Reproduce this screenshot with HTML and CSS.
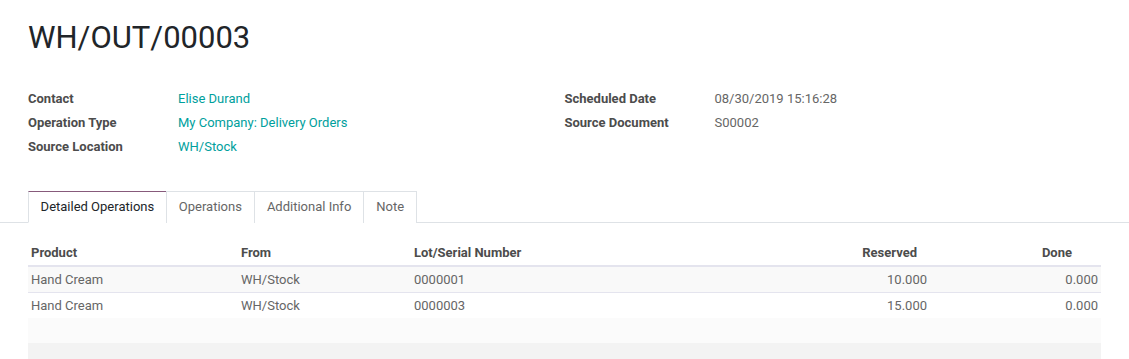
FILE: index.html
```html
<!DOCTYPE html>
<html>
<head>
    <title>WH/OUT/00003</title>
    <link rel="stylesheet" href="styles.css">
</head>
<body>
    <div class="sheet">
        <h1 class="title">WH/OUT/00003</h1>

        <div class="groups">
            <div class="group">
                <div class="field">
                    <span class="label">Contact</span>
                    <a class="value link">Elise Durand</a>
                </div>
                <div class="field">
                    <span class="label">Operation Type</span>
                    <a class="value link">My Company: Delivery Orders</a>
                </div>
                <div class="field">
                    <span class="label">Source Location</span>
                    <a class="value link">WH/Stock</a>
                </div>
            </div>
            <div class="group">
                <div class="field">
                    <span class="label">Scheduled Date</span>
                    <span class="value">08/30/2019 15:16:28</span>
                </div>
                <div class="field">
                    <span class="label">Source Document</span>
                    <span class="value">S00002</span>
                </div>
            </div>
        </div>
    </div>

    <ul class="tabs">
        <li class="tab active">Detailed Operations</li>
        <li class="tab">Operations</li>
        <li class="tab">Additional Info</li>
        <li class="tab">Note</li>
    </ul>

    <div class="sheet">
        <table class="lines">
            <colgroup>
                <col style="width: 210px">
                <col style="width: 173px">
                <col>
                <col style="width: 180px">
                <col style="width: 171px">
            </colgroup>
            <thead>
                <tr>
                    <th>Product</th>
                    <th>From</th>
                    <th>Lot/Serial Number</th>
                    <th class="num reserved">Reserved</th>
                    <th class="num done">Done</th>
                </tr>
            </thead>
            <tbody>
                <tr>
                    <td>Hand Cream</td>
                    <td>WH/Stock</td>
                    <td>0000001</td>
                    <td class="num">10.000</td>
                    <td class="num">0.000</td>
                </tr>
                <tr class="last">
                    <td>Hand Cream</td>
                    <td>WH/Stock</td>
                    <td>0000003</td>
                    <td class="num">15.000</td>
                    <td class="num">0.000</td>
                </tr>
                <tr class="filler">
                    <td colspan="5"></td>
                </tr>
                <tr class="filler dark">
                    <td colspan="5"></td>
                </tr>
            </tbody>
        </table>
    </div>
</body>
</html>
```

FILE: styles.css
```css
body {
    margin: 0;
    padding-top: 20px;
    font-family: Roboto, "Noto Sans", sans-serif;
    font-size: 13px;
    color: #666;
    background: #fff;
}
.sheet {
    padding: 0 28px;
}
.title {
    margin: 0;
    font-size: 31px;
    line-height: 36px;
    font-weight: 400;
    color: #212529;
}
.groups {
    display: grid;
    grid-template-columns: 1fr 1fr;
    margin-top: 31px;
}
.field {
    display: flex;
    line-height: 24px;
}
.label {
    width: 150px;
    flex: none;
    font-weight: bold;
    color: #4c4c4c;
}
.link {
    color: #00a09d;
    text-decoration: none;
}
.tabs {
    display: flex;
    list-style: none;
    margin: 32px 0 0;
    padding: 0 0 0 28px;
    border-bottom: 1px solid #dee2e6;
}
.tab {
    padding: 1px 12px 0;
    line-height: 28px;
    border: 1px solid #dee2e6;
    border-bottom: none;
    margin-bottom: -1px;
    margin-left: -1px;
    background: #fff;
}
.tab:first-child {
    margin-left: 0;
    padding: 1px 11.6px 0;
}
.tab.active {
    color: #212529;
    border-top-color: #875a7b;
    border-bottom: 1px solid #fff;
    height: 29px;
}
.lines {
    width: 100%;
    margin-top: 17px;
    border-collapse: collapse;
    table-layout: fixed;
}
.lines th {
    text-align: left;
    font-weight: bold;
    color: #4c4c4c;
    height: 25px;
    padding: 0 3px;
    border-bottom: 2px solid #e4e4ee;
}
.lines td {
    height: 25px;
    padding: 0 3px;
    border-bottom: 1px solid #e4e4ee;
}
.lines tr.last td {
    border-bottom: none;
}
.lines .num {
    text-align: right;
}
.lines th.reserved {
    padding-right: 13px;
}
.lines th.done {
    padding-right: 29px;
}
.lines tbody tr:first-child {
    background: #f9f9f9;
}
.lines tr.filler td {
    border-bottom: none;
    background: #fbfbfb;
}
.lines tr.filler.dark td {
    background: #f3f3f3;
}
```
